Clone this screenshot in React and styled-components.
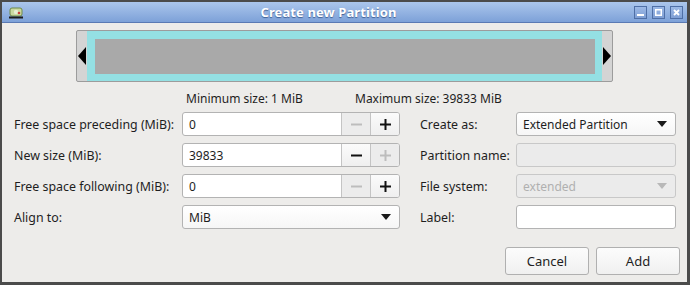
import styled, { createGlobalStyle } from "styled-components";

const GlobalStyle = createGlobalStyle`
  html, body {
    margin: 0;
    padding: 0;
    background: #4b4b4b;
  }
  * {
    box-sizing: border-box;
  }
`;

const leftRows = [
  { label: "Free space preceding (MiB):", value: "0", minus: false, plus: true },
  { label: "New size (MiB):", value: "39833", minus: true, plus: false },
  { label: "Free space following (MiB):", value: "0", minus: false, plus: true },
];

const DriveIcon = () => (
  <svg width="14" height="13" viewBox="0 0 14 13">
    <rect x="1" y="2" width="12" height="8" rx="2" fill="#c9d9a0" stroke="#6f8a4a" strokeWidth="1" />
    <circle cx="7" cy="6" r="2.2" fill="#e7efd2" />
    <circle cx="10" cy="7" r="1.3" fill="#c8403a" />
    <rect x="0" y="10.5" width="14" height="2" fill="#1c1c1c" />
  </svg>
);

const Arrow = ({ dir }) => (
  <svg width="10" height="20" viewBox="0 0 10 20">
    {dir === "left" ? (
      <polygon points="9,1 9,19 1,10" fill="#000" />
    ) : (
      <polygon points="1,1 1,19 9,10" fill="#000" />
    )}
  </svg>
);

const Caret = ({ disabled }) => (
  <svg width="10" height="6" viewBox="0 0 10 6">
    <polygon points="0,0 10,0 5,6" fill={disabled ? "#b8b8b8" : "#1a1a1a"} />
  </svg>
);

export default function App() {
  return (
    <>
      <GlobalStyle />
      <Window>
        <TitleBar>
          <IconSlot>
            <DriveIcon />
          </IconSlot>
          <Title>Create new Partition</Title>
          <WinButtons>
            <WinButton>
              <svg width="7" height="7" viewBox="0 0 7 7">
                <rect x="0" y="5" width="7" height="2" fill="#fff" />
              </svg>
            </WinButton>
            <WinButton>
              <svg width="7" height="7" viewBox="0 0 7 7">
                <rect x="0.75" y="0.75" width="5.5" height="5.5" fill="none" stroke="#fff" strokeWidth="1.5" />
              </svg>
            </WinButton>
            <WinButton>
              <svg width="7" height="7" viewBox="0 0 7 7">
                <path d="M1 1 L6 6 M6 1 L1 6" stroke="#fff" strokeWidth="1.8" />
              </svg>
            </WinButton>
          </WinButtons>
        </TitleBar>

        <Body>
          <PartBar>
            <Handle>
              <Arrow dir="left" />
            </Handle>
            <PartFill>
              <PartInner />
            </PartFill>
            <Handle>
              <Arrow dir="right" />
            </Handle>
          </PartBar>

          <SizeInfo>
            <SizeText>Minimum size: 1 MiB</SizeText>
            <SizeText>Maximum size: 39833 MiB</SizeText>
          </SizeInfo>

          <Form>
            <Column $labelWidth="168px">
              {leftRows.map((row, i) => (
                <Row key={i}>
                  <Label>{row.label}</Label>
                  <Spin>
                    <SpinInput>{row.value}</SpinInput>
                    <SpinButton $enabled={row.minus}>
                      <svg width="11" height="11" viewBox="0 0 11 11">
                        <rect x="0" y="4.5" width="11" height="2" fill="currentColor" />
                      </svg>
                    </SpinButton>
                    <SpinButton $enabled={row.plus}>
                      <svg width="11" height="11" viewBox="0 0 11 11">
                        <rect x="0" y="4.5" width="11" height="2" fill="currentColor" />
                        <rect x="4.5" y="0" width="2" height="11" fill="currentColor" />
                      </svg>
                    </SpinButton>
                  </Spin>
                </Row>
              ))}
              <Row>
                <Label>Align to:</Label>
                <Select>
                  <span>MiB</span>
                  <Caret />
                </Select>
              </Row>
            </Column>

            <Column $labelWidth="96px">
              <Row>
                <Label>Create as:</Label>
                <Select>
                  <span>Extended Partition</span>
                  <Caret />
                </Select>
              </Row>
              <Row>
                <Label>Partition name:</Label>
                <TextBox $disabled />
              </Row>
              <Row>
                <Label>File system:</Label>
                <Select $disabled>
                  <span>extended</span>
                  <Caret disabled />
                </Select>
              </Row>
              <Row>
                <Label>Label:</Label>
                <TextBox />
              </Row>
            </Column>
          </Form>

          <Footer>
            <PushButton>Cancel</PushButton>
            <PushButton>Add</PushButton>
          </Footer>
        </Body>
      </Window>
    </>
  );
}

const Window = styled.div`
  width: 690px;
  height: 285px;
  display: flex;
  flex-direction: column;
  background: #edecea;
  border-style: solid;
  border-color: #4b4b4b;
  border-width: 2px 3px 3px 2px;
  font-family: "Noto Sans", "Open Sans", sans-serif;
  font-size: 12px;
  color: #1e1e1e;
  overflow: hidden;
`;

const TitleBar = styled.div`
  height: 21px;
  flex-shrink: 0;
  display: flex;
  align-items: center;
  padding: 0 4px 0 7px;
  background: linear-gradient(to bottom, #abc6ec, #7da1d8);
  border-bottom: 1px solid #5a7ab4;
`;

const IconSlot = styled.div`
  width: 14px;
  height: 13px;
  display: flex;
`;

const Title = styled.div`
  flex: 1;
  text-align: center;
  font-weight: 700;
  font-size: 13px;
  color: #fff;
  text-shadow: 0 1px 1px #3f5f94;
  letter-spacing: 0.1px;
`;

const WinButtons = styled.div`
  display: flex;
  gap: 5px;
`;

const WinButton = styled.div`
  width: 13px;
  height: 13px;
  display: flex;
  align-items: center;
  justify-content: center;
  border: 1px solid #4f6fa6;
  background: linear-gradient(to bottom, #9cb9e6, #7f9fd4);
`;

const Body = styled.div`
  flex: 1;
  display: flex;
  flex-direction: column;
  padding: 7px 7px 0 12px;
`;

const PartBar = styled.div`
  margin-left: 62px;
  width: 537px;
  height: 52px;
  display: flex;
  border: 1px solid #9c9c9c;
  border-radius: 2px;
  background: #d4d4d4;
`;

const Handle = styled.div`
  width: 10px;
  display: flex;
  align-items: center;
  justify-content: center;
`;

const PartFill = styled.div`
  flex: 1;
  background: #94e0e3;
  padding: 8px 7px 7px 8px;
  display: flex;
`;

const PartInner = styled.div`
  flex: 1;
  background: #a9a9a9;
`;

const SizeInfo = styled.div`
  height: 30px;
  display: flex;
  align-items: center;
  padding-left: 172px;
  padding-top: 2px;
`;

const SizeText = styled.span`
  width: 169px;
  white-space: nowrap;
`;

const Form = styled.div`
  display: flex;
  gap: 20px;
`;

const Column = styled.div`
  display: grid;
  grid-template-columns: ${(p) => p.$labelWidth} auto;
  row-gap: 7px;
  & > div {
    display: contents;
  }
`;

const Row = styled.div``;

const Label = styled.div`
  display: flex;
  align-items: center;
  height: 24px;
  font-size: 12.4px;
  white-space: nowrap;
`;

const Spin = styled.div`
  width: 218px;
  height: 24px;
  display: flex;
  border: 1px solid #b3b3b3;
  border-radius: 3px;
  overflow: hidden;
  background: #fff;
`;

const SpinInput = styled.div`
  flex: 1;
  display: flex;
  align-items: center;
  padding-left: 6px;
`;

const SpinButton = styled.div`
  width: 29px;
  display: flex;
  align-items: center;
  justify-content: center;
  border-left: 1px solid #c4c4c4;
  background: ${(p) =>
    p.$enabled ? "linear-gradient(to bottom, #fbfbfb, #efefef)" : "#ececec"};
  color: ${(p) => (p.$enabled ? "#111" : "#bdbdbd")};
`;

const Select = styled.div`
  min-width: 160px;
  height: 24px;
  display: flex;
  align-items: center;
  justify-content: space-between;
  padding: 0 8px 0 6px;
  border: 1px solid ${(p) => (p.$disabled ? "#c8c8c8" : "#b3b3b3")};
  border-radius: 3px;
  background: ${(p) =>
    p.$disabled ? "#ebebeb" : "linear-gradient(to bottom, #ffffff, #f6f6f6)"};
  color: ${(p) => (p.$disabled ? "#b0b0b0" : "#1e1e1e")};
`;

const TextBox = styled.div`
  width: 160px;
  height: 24px;
  border: 1px solid ${(p) => (p.$disabled ? "#c8c8c8" : "#b3b3b3")};
  border-radius: 3px;
  background: ${(p) => (p.$disabled ? "#ebebeb" : "#fff")};
`;

const Footer = styled.div`
  display: flex;
  justify-content: flex-end;
  gap: 7px;
  padding-top: 18px;
`;

const PushButton = styled.div`
  width: 84px;
  height: 28px;
  display: flex;
  align-items: center;
  justify-content: center;
  border: 1px solid #b0b0b0;
  border-radius: 3px;
  background: linear-gradient(to bottom, #fcfcfc, #f0f0f0);
  font-size: 13px;
`;
